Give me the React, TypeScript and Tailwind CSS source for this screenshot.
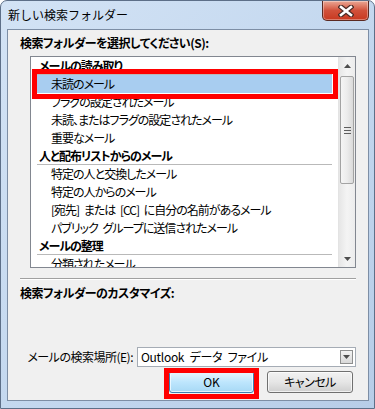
import React from 'react';

const jp = "font-['Noto_Sans_CJK_JP','Noto_Sans',sans-serif] [font-feature-settings:'palt']";

type Row = { text: string; kind: 'header' | 'item'; selected?: boolean };

const rows: Row[] = [
  { text: 'メールの読み取り', kind: 'header' },
  { text: '未読のメール', kind: 'item', selected: true },
  { text: 'フラグの設定されたメール', kind: 'item' },
  { text: '未読、またはフラグの設定されたメール', kind: 'item' },
  { text: '重要なメール', kind: 'item' },
  { text: '人と配布リストからのメール', kind: 'header' },
  { text: '特定の人と交換したメール', kind: 'item' },
  { text: '特定の人からのメール', kind: 'item' },
  { text: '[宛先] または [CC] に自分の名前があるメール', kind: 'item' },
  { text: 'パブリック グループに送信されたメール', kind: 'item' },
  { text: 'メールの整理', kind: 'header' },
  { text: '分類されたメール', kind: 'item' },
];

function Arrow({ down }: { down?: boolean }) {
  return (
    <svg width="7" height="4" viewBox="0 0 7 4" className="block">
      <path d={down ? 'M0 0 H7 L3.5 4 Z' : 'M0 4 H7 L3.5 0 Z'} fill="#4d4d4d" />
    </svg>
  );
}

function Scrollbar() {
  return (
    <div className="w-[17px] h-full flex flex-col border-l border-[#e3e3e3] bg-gradient-to-r from-[#e6e6e6] via-[#f4f4f4] to-[#ececec]">
      <div className="h-[17px] flex items-center justify-center">
        <Arrow />
      </div>
      <div className="mt-[2px] mx-[1px] h-[108px] rounded-[2px] border border-[#a3a3a3] bg-gradient-to-r from-[#f5f5f5] via-[#ececec] to-[#dadada] flex flex-col items-center justify-center gap-[2px]">
        <div className="w-[7px] h-px bg-[#5e5e5e]" />
        <div className="w-[7px] h-px bg-[#5e5e5e]" />
        <div className="w-[7px] h-px bg-[#5e5e5e]" />
      </div>
      <div className="flex-1" />
      <div className="h-[17px] flex items-center justify-center">
        <Arrow down />
      </div>
    </div>
  );
}

function ListBox() {
  return (
    <div className="ml-[10px] mt-[5px] w-[326px] h-[212px] border border-[#828790] bg-white flex overflow-hidden">
      <div className="flex-1 overflow-hidden px-[6px]">
        {rows.map((r, i) =>
          r.kind === 'header' ? (
            <div key={i} className="h-[18px] border-b border-[#b9b9b9] flex items-center pl-[2px] font-bold text-[12px] tracking-[-1px] text-black whitespace-nowrap">
              {r.text}
            </div>
          ) : (
            <div
              key={i}
              className={`h-[18px] flex items-center pl-[14px] text-[12px] tracking-[-1px] [word-spacing:3px] text-black whitespace-pre ${r.selected ? 'bg-[#a8cdf0]' : ''}`}
            >
              {r.text}
            </div>
          )
        )}
      </div>
      <Scrollbar />
    </div>
  );
}

function CloseButton() {
  return (
    <div className="absolute top-0 right-[5px] w-[47px] h-[20px] rounded-b-[5px] border border-t-0 border-[#5b2a22] bg-gradient-to-b from-[#e9a795] via-[#d1503a] to-[#c8381f] flex items-center justify-center shadow-[inset_0_0_0_1px_rgba(255,255,255,0.35)]">
      <svg width="16" height="12" viewBox="0 0 16 12">
        <path d="M3 2 L13 10 M13 2 L3 10" stroke="#4a2a25" strokeWidth="5" strokeLinecap="square" />
        <path d="M3 2 L13 10 M13 2 L3 10" stroke="#ffffff" strokeWidth="2.6" strokeLinecap="square" />
      </svg>
    </div>
  );
}

export default function App() {
  return (
    <div className={`${jp} relative w-[375px] h-[409px] overflow-hidden bg-white`}>
      <div className="relative w-full h-full rounded-t-[7px] border border-[#5d6f88] bg-gradient-to-br from-[#d3e3f5] via-[#c4d8ef] to-[#b7cde8] flex flex-col pl-[6px] pr-[5px] pb-[7px]">
        {/* Title bar */}
        <div className="h-[28px] flex items-center pl-[1px] text-[12px] text-black [font-feature-settings:normal]">
          新しい検索フォルダー
        </div>
        <CloseButton />

        {/* Dialog body */}
        <div className="flex-1 border border-[#7d8ea5] bg-[#f0f0f0] flex flex-col px-[12px]">
          <div className="mt-[5px] h-[16px] leading-[16px] text-[12px] tracking-[-0.5px] font-bold text-black">
            検索フォルダーを選択してください(S):
          </div>
          <ListBox />

          <div className="mt-[10px] w-[336px] h-px bg-[#a0a0a0] shadow-[0_1px_0_#ffffff]" />

          <div className="mt-[6px] h-[16px] leading-[16px] text-[12px] tracking-[-0.5px] font-bold text-black">
            検索フォルダーのカスタマイズ:
          </div>

          <div className="mt-[46px] flex items-center justify-end gap-[4px]">
            <span className="text-[12px] tracking-[-0.5px] text-black">メールの検索場所(E):</span>
            <div className="w-[219px] h-[20px] border border-[#a5acb5] bg-white flex items-center pl-[3px] pr-[2px]">
              <span className="flex-1 text-[12px] tracking-[-0.3px] [word-spacing:3px] text-black whitespace-pre">Outlook データ ファイル</span>
              <div className="w-[13px] h-[14px] border border-[#8e8f8f] bg-gradient-to-b from-[#f2f2f2] to-[#d9d9d9] flex items-center justify-center">
                <Arrow down />
              </div>
            </div>
          </div>

          <div className="mt-[4px] flex justify-end gap-[13px] pr-[3px]">
            <button className="w-[85px] h-[22px] rounded-[3px] border border-[#3c7fb1] bg-gradient-to-b from-[#eaf6fd] via-[#bee6fd] to-[#a7d9f5] shadow-[inset_0_0_0_1px_rgba(255,255,255,0.7)] text-[12px] font-normal text-black flex items-center justify-center">
              OK
            </button>
            <button className="w-[86px] h-[22px] rounded-[3px] border border-[#707070] bg-gradient-to-b from-[#f2f2f2] via-[#e6e6e6] to-[#cfcfcf] shadow-[inset_0_0_0_1px_rgba(255,255,255,0.7)] text-[12px] font-normal tracking-[-0.5px] text-black flex items-center justify-center">
              キャンセル
            </button>
          </div>
        </div>
      </div>

      {/* Red annotation boxes */}
      <div className="absolute left-[32px] top-[69px] w-[306px] h-[30px] border-[5px] border-[#ff0000]" />
      <div className="absolute left-[164px] top-[368px] w-[95px] h-[31px] border-[5px] border-[#ff0000]" />
    </div>
  );
}
